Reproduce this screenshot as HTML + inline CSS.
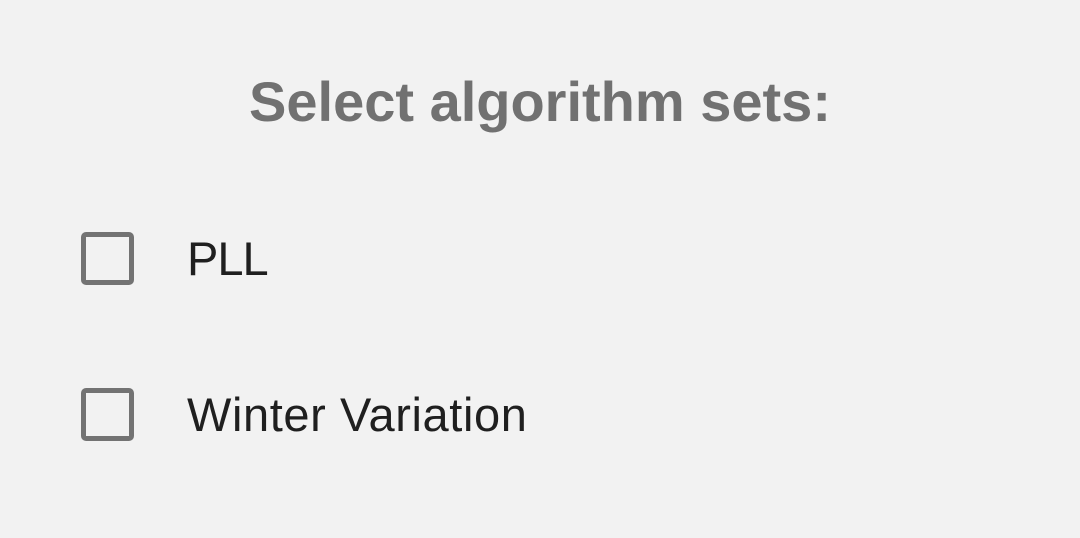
<!DOCTYPE html>
<html><head><style>
body{margin:0;width:1080px;height:538px;background:#f2f2f2;font-family:"Liberation Sans",Arial,sans-serif;position:relative;overflow:hidden}
.t{position:absolute;left:0;width:1080px;text-align:center;top:70px;font-size:56px;font-weight:bold;color:#717171;line-height:64px;letter-spacing:0px}
.cb{position:absolute;left:81px;width:43px;height:43px;border:5px solid #737373;border-radius:5px}
.l{position:absolute;left:187px;font-size:47px;color:#1f1f1f;line-height:56px}
</style></head><body>
<div class="t">Select algorithm sets:</div>
<div class="cb" style="top:232px"></div>
<div class="l" style="top:231px;letter-spacing:-1px">PLL</div>
<div class="cb" style="top:388px"></div>
<div class="l" style="top:387px;letter-spacing:0.6px">Winter Variation</div>
</body></html>
